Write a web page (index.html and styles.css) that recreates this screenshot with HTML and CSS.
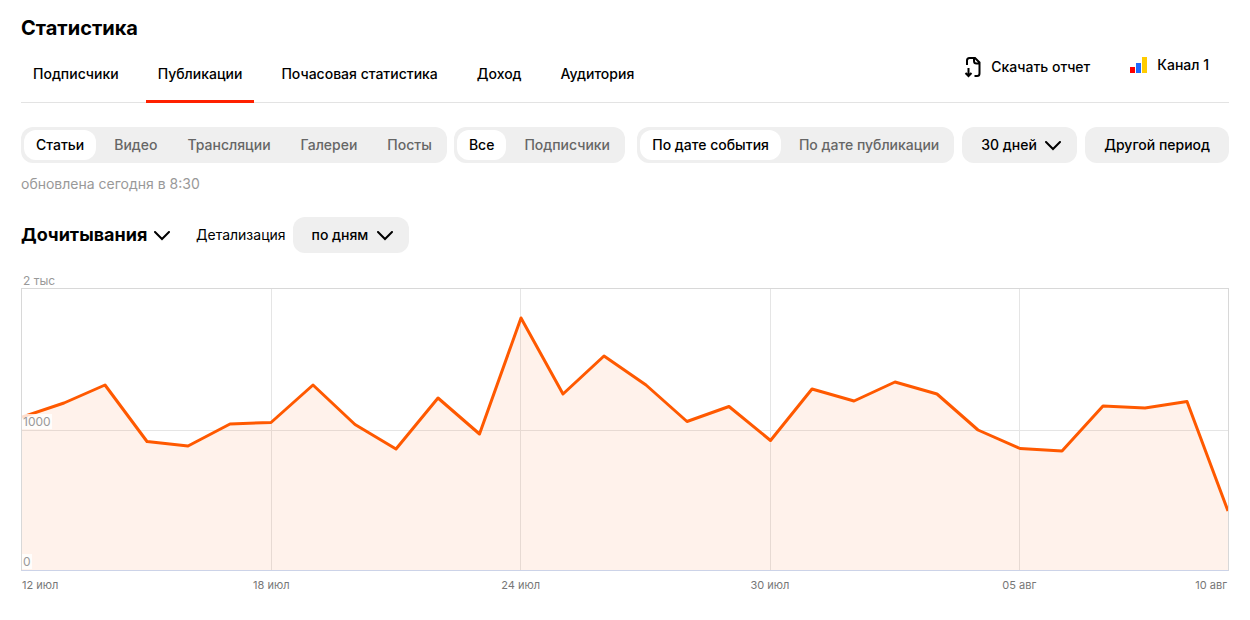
FILE: index.html
```html
<!DOCTYPE html>
<html lang="ru">
<head>
<meta charset="utf-8">
<meta name="viewport" content="width=device-width, initial-scale=1">
<title>Статистика</title>
<link rel="stylesheet" href="styles.css">
</head>
<body>
<main class="page">
  <h1 class="title">Статистика</h1>

  <header class="header">
    <nav class="tabs">
      <a class="tab" href="#subscribers">Подписчики</a>
      <a class="tab tab-active" href="#publications" aria-current="page">Публикации</a>
      <a class="tab" href="#hourly">Почасовая статистика</a>
      <a class="tab" href="#income">Доход</a>
      <a class="tab" href="#audience">Аудитория</a>
    </nav>
    <div class="actions">
      <button class="action action-download" type="button">
        <svg width="17" height="22" viewBox="0 0 17 22" aria-hidden="true">
          <path d="M3 9V4.500Q3 2 5.500 2H11L15.500 6.500V17.500Q15.500 20 13 20H10.500M10 2.500V5Q10 7.500 12.500 7.500H15M4.500 12V20M1.500 17L4.500 20L7.500 17" fill="none" stroke="currentColor" stroke-width="2"/>
        </svg>
        Скачать отчет
      </button>
      <button class="action action-channel" type="button">
        <svg width="17" height="16" viewBox="0 0 17 16" aria-hidden="true">
          <path d="M0 10h5v6H0z" fill="#ff0000"/>
          <path d="M6 6h5v10H6z" fill="#1f6bff"/>
          <path d="M12 0h5v16h-5z" fill="#ffcc00"/>
        </svg>
        Канал 1
      </button>
    </div>
  </header>

  <div class="filters">
    <div class="segment" role="group" aria-label="Тип публикаций">
      <button class="option option-active" type="button" aria-pressed="true">Статьи</button>
      <button class="option" type="button" aria-pressed="false">Видео</button>
      <button class="option" type="button" aria-pressed="false">Трансляции</button>
      <button class="option" type="button" aria-pressed="false">Галереи</button>
      <button class="option" type="button" aria-pressed="false">Посты</button>
    </div>
    <div class="segment" role="group" aria-label="Читатели">
      <button class="option option-active" type="button" aria-pressed="true">Все</button>
      <button class="option" type="button" aria-pressed="false">Подписчики</button>
    </div>
    <div class="period">
      <div class="segment" role="group" aria-label="Дата">
        <button class="option option-active" type="button" aria-pressed="true">По дате события</button>
        <button class="option" type="button" aria-pressed="false">По дате публикации</button>
      </div>
      <div class="dropdown">
        <select class="select" aria-label="Период"><option>30 дней</option></select>
        <svg class="chevron" width="16" height="10" viewBox="0 0 16 10" aria-hidden="true"><path d="M1 1L8 8L15 1"/></svg>
      </div>
      <button class="other" type="button">Другой период</button>
    </div>
  </div>

  <p class="updated">обновлена сегодня в 8:30</p>

  <div class="controls">
    <div class="dropdown">
      <select class="metric" aria-label="Показатель"><option>Дочитывания</option></select>
      <svg class="chevron chevron-metric" width="16" height="10" viewBox="0 0 16 10" aria-hidden="true"><path d="M1 1L8 8L15 1"/></svg>
    </div>
    <div class="detail">
      <label for="detail">Детализация</label>
      <div class="dropdown">
        <select class="select" id="detail"><option>по дням</option></select>
        <svg class="chevron" width="16" height="10" viewBox="0 0 16 10" aria-hidden="true"><path d="M1 1L8 8L15 1"/></svg>
      </div>
    </div>
  </div>

  <section class="chart" aria-label="Дочитывания по дням">
    <div class="scale-top">2 тыс</div>
    <div class="plot">
      <svg class="graph" viewBox="0 0 1206 281" preserveAspectRatio="none" aria-hidden="true">
        <path class="grid-line" d="M249.500 0V281M498.500 0V281M748.500 0V281M997.500 0V281M0 141.500H1206"/>
        <path class="area" d="M0 128L42 114L83 96L125 153L166 157L208 135L249 133L291 96L333 136L374 160L416 109L457 145L499 29L541 105L582 67L624 96L665 132L707 117L748 152L790 100L832 112L873 93L915 105L956 141L998 160L1040 162L1081 117L1123 119L1164 112L1206 222V281H0Z"/>
        <path class="line" d="M0 128L42 114L83 96L125 152.500L166 157L208 135L249 133.500L291 96L333 135.500L374 160L416 109L457.500 145L499 29L541 105L582 67L624 96L665 132.500L707 117.500L748.500 151.500L790 100L832 112L873 93L915 105L956 141L998 159.500L1040 162L1081 117L1123 119L1165 112.500L1206 222"/>
      </svg>
      <span class="mark mark-middle">1000</span>
      <span class="mark mark-bottom">0</span>
    </div>
    <div class="dates">
      <span>12 июл</span>
      <span>18 июл</span>
      <span>24 июл</span>
      <span>30 июл</span>
      <span>05 авг</span>
      <span>10 авг</span>
    </div>
  </section>
</main>
</body>
</html>
```
FILE: styles.css
```css
* { box-sizing: border-box; }

body {
  margin: 0;
  background: #fff;
  color: #000;
  font-family: Inter, "Liberation Sans", sans-serif;
  font-size: 14px;
  line-height: 20px;
}

button, select {
  margin: 0;
  padding: 0;
  border: 0;
  background: none;
  color: inherit;
  font: inherit;
  font-weight: 500;
  cursor: pointer;
}

.page { padding: 16px 21px; }

.title {
  margin: 0;
  font-size: 20px;
  line-height: 24px;
  font-weight: 700;
}

.header {
  display: flex;
  justify-content: space-between;
  margin-top: 12px;
  border-bottom: 1px solid #e3e3e3;
}

.tabs { display: flex; gap: 15px; margin-bottom: -1px; }

.tab {
  padding: 12px 12px 16px;
  border-bottom: 3px solid transparent;
  color: inherit;
  font-weight: 500;
  text-decoration: none;
}

.tab-active { border-color: #ff2000; }

.actions {
  display: flex;
  align-items: flex-start;
  gap: 40px;
  padding-right: 20px;
}

.action { display: flex; align-items: center; gap: 10px; }
.action-download { height: 30px; }
.action-channel { height: 26px; }

.filters { display: flex; gap: 7px; margin-top: 24px; }

.period { display: flex; gap: 8px; margin-left: auto; }

.segment {
  display: flex;
  gap: 6px;
  padding: 3px;
  border-radius: 12px;
  background: #efefef;
}

.option {
  height: 30px;
  padding: 0 12px;
  border-radius: 12px;
  color: #666;
  white-space: nowrap;
}

.option-active { background: #fff; color: #000; }

.dropdown { position: relative; }

.select, .other {
  height: 36px;
  border-radius: 12px;
  background: #efefef;
  white-space: nowrap;
}

.select { padding: 0 40px 0 19px; appearance: none; }
.other { padding: 0 19px; }

.chevron {
  position: absolute;
  top: 14px;
  right: 16px;
  fill: none;
  stroke: #000;
  stroke-width: 2;
  stroke-linecap: round;
  pointer-events: none;
}

.chevron-metric { right: 0; }

.updated { margin: 11px 0 0; color: #999; }

.controls { display: flex; gap: 26px; margin-top: 23px; }

.metric {
  height: 36px;
  padding-right: 22px;
  appearance: none;
  font-size: 18px;
  font-weight: 700;
}

.detail { display: flex; align-items: center; gap: 7px; }

.chart { margin-top: 20px; color: #999; font-size: 12px; }

.scale-top { padding-left: 2px; line-height: 15px; }

.plot { position: relative; border: 1px solid #d8d8d8; border-bottom-color: #ccd3e8; }

.graph { display: block; width: 100%; height: 281px; }

.grid-line { fill: none; stroke: #e5e5e5; vector-effect: non-scaling-stroke; }
.area { fill: #ff5c00; fill-opacity: 0.08; }
.line {
  fill: none;
  stroke: #ff5900;
  stroke-width: 3;
  stroke-linejoin: round;
  vector-effect: non-scaling-stroke;
}

.mark {
  position: absolute;
  left: 0;
  padding: 0 1px;
  background: rgba(255, 255, 255, 0.8);
  line-height: 15px;
}

.mark-middle { bottom: 141px; }
.mark-bottom { bottom: 1px; }

.dates {
  display: grid;
  grid-template-columns: 3fr 6fr 6fr 6fr 6fr 2fr;
  padding: 6px 2px 0 1px;
  color: #777;
  font-size: 11px;
  line-height: 16px;
  text-align: center;
}

.dates span:first-child { text-align: left; }
.dates span:last-child { text-align: right; }
```
